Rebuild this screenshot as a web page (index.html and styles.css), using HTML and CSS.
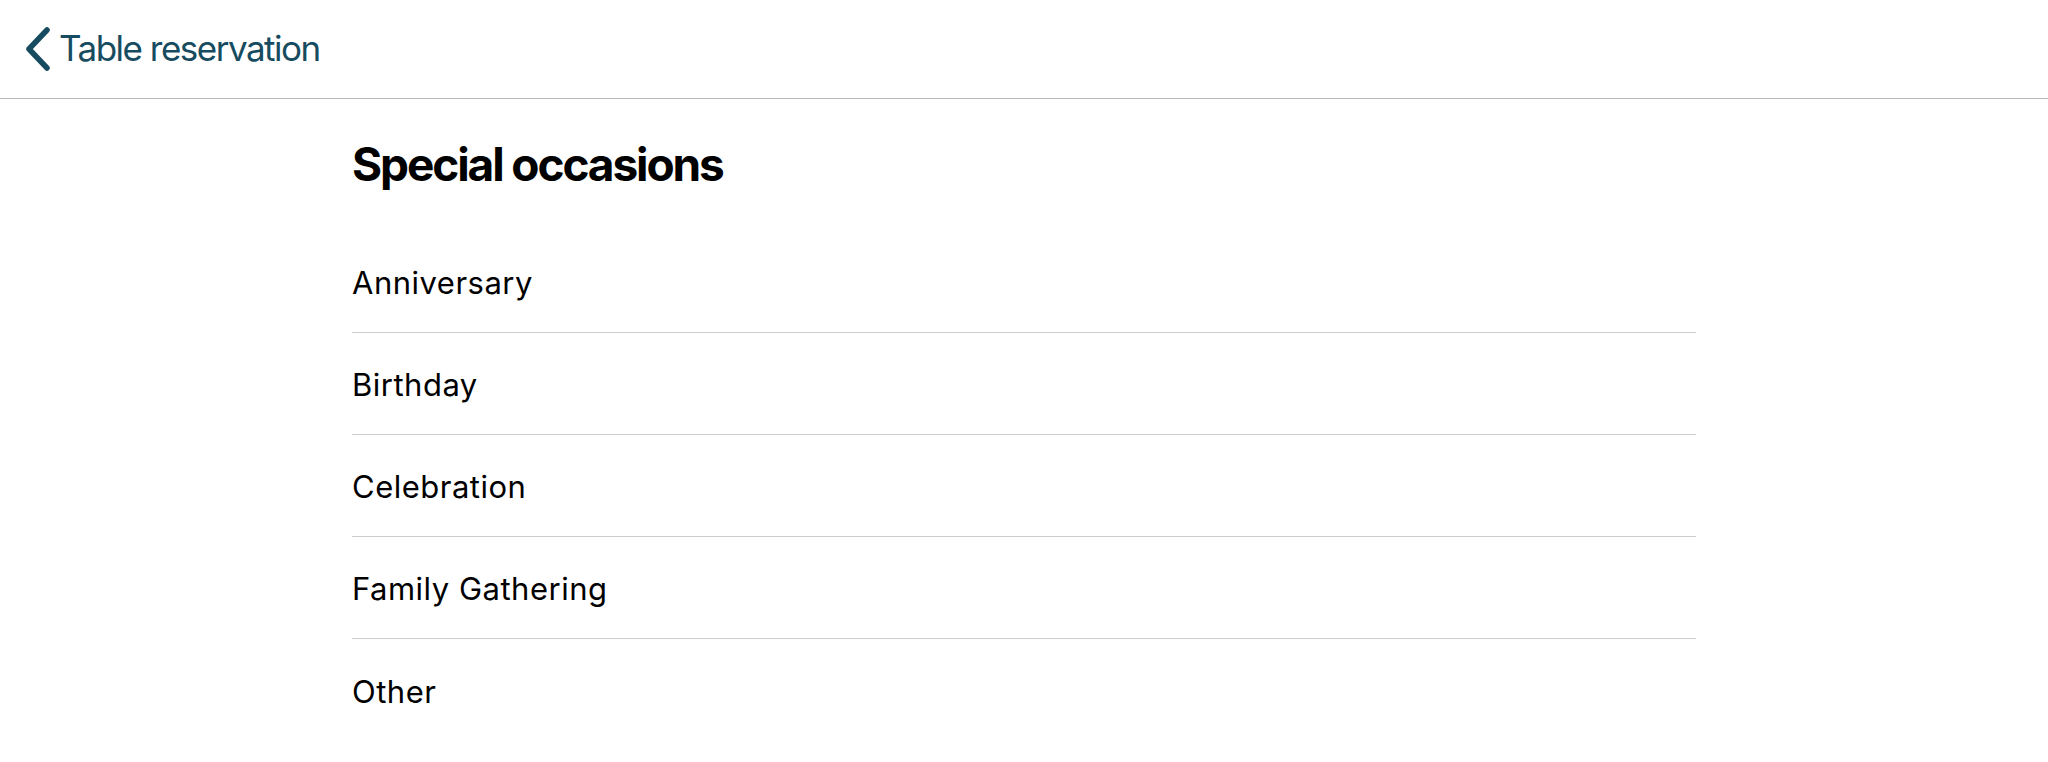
FILE: index.html
```html
<!DOCTYPE html>
<html lang="en">
<head>
<meta charset="utf-8">
<title>Special occasions</title>
<link rel="stylesheet" href="styles.css">
</head>
<body>
<header class="topbar">
  <a class="back" href="#">
    <svg class="chev" width="26" height="44" viewBox="0 0 26 44" aria-hidden="true">
      <path d="M22 3 L4 22 L22 41" fill="none" stroke="currentColor" stroke-width="5.5" stroke-linecap="round" stroke-linejoin="round"/>
    </svg>
    <span class="back-label">Table reservation</span>
  </a>
</header>
<main class="content">
  <h1 class="title">Special occasions</h1>
  <ul class="list">
    <li class="item">Anniversary</li>
    <li class="item">Birthday</li>
    <li class="item">Celebration</li>
    <li class="item">Family Gathering</li>
    <li class="item">Other</li>
  </ul>
</main>
</body>
</html>
```
FILE: styles.css
```css
* { box-sizing: border-box; }
html, body {
  margin: 0;
  padding: 0;
  background: #ffffff;
  font-family: "Inter", "Liberation Sans", sans-serif;
  color: #000;
}
.topbar {
  height: 99px;
  border-bottom: 1px solid #b9b9b9;
  display: flex;
  align-items: center;
  padding-left: 25px;
}
.back {
  display: flex;
  align-items: center;
  gap: 8px;
  color: #164b60;
  text-decoration: none;
}
.chev { display: block; }
.back-label {
  font-size: 35px;
  font-weight: 400;
  letter-spacing: -1.5px;
  padding-bottom: 3px;
}
.content {
  width: 1344px;
  margin: 0 auto;
  padding-top: 37px;
}
.title {
  margin: 0;
  font-size: 46px;
  font-weight: 700;
  line-height: 56px;
  letter-spacing: -2.1px;
}
.list {
  list-style: none;
  margin: 39px 0 0;
  padding: 0;
}
.item {
  height: 102px;
  display: flex;
  align-items: center;
  padding-top: 2px;
  font-size: 31px;
  letter-spacing: 0.5px;
  border-bottom: 1px solid #cccccc;
}
.item:last-child { border-bottom: none; }
```
